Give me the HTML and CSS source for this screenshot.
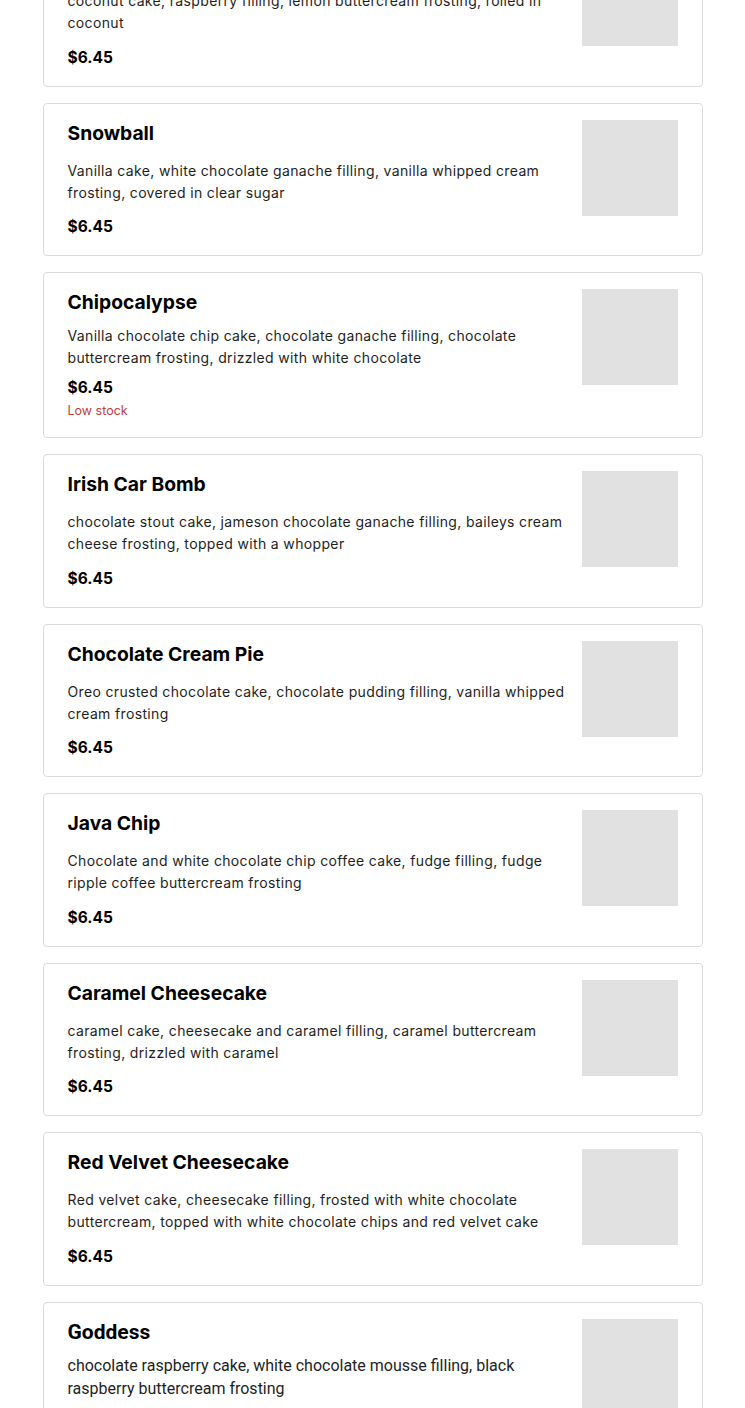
FILE: index.html
```html
<!DOCTYPE html>
<html lang="en">
<head>
<meta charset="utf-8">
<title>Cupcakes</title>
<link rel="stylesheet" href="styles.css">
</head>
<body>
<main class="menu">
  <article class="card">
    <div class="info">
      <h3 class="name">Lemon Raspberry Coconut</h3>
      <p class="desc">coconut cake, raspberry filling, lemon buttercream frosting, rolled in coconut</p>
      <div class="meta"><span class="price">$6.45</span></div>
    </div>
    <div class="thumb"></div>
  </article>
  <article class="card">
    <div class="info">
      <h3 class="name">Snowball</h3>
      <p class="desc">Vanilla cake, white chocolate ganache filling, vanilla whipped cream frosting, covered in clear sugar</p>
      <div class="meta"><span class="price">$6.45</span></div>
    </div>
    <div class="thumb"></div>
  </article>
  <article class="card">
    <div class="info">
      <h3 class="name">Chipocalypse</h3>
      <p class="desc">Vanilla chocolate chip cake, chocolate ganache filling, chocolate buttercream frosting, drizzled with white chocolate</p>
      <div class="meta"><span class="price">$6.45</span><span class="stock">Low stock</span></div>
    </div>
    <div class="thumb"></div>
  </article>
  <article class="card">
    <div class="info">
      <h3 class="name">Irish Car Bomb</h3>
      <p class="desc">chocolate stout cake, jameson chocolate ganache filling, baileys cream cheese frosting, topped with a whopper</p>
      <div class="meta"><span class="price">$6.45</span></div>
    </div>
    <div class="thumb"></div>
  </article>
  <article class="card">
    <div class="info">
      <h3 class="name">Chocolate Cream Pie</h3>
      <p class="desc">Oreo crusted chocolate cake, chocolate pudding filling, vanilla whipped cream frosting</p>
      <div class="meta"><span class="price">$6.45</span></div>
    </div>
    <div class="thumb"></div>
  </article>
  <article class="card">
    <div class="info">
      <h3 class="name">Java Chip</h3>
      <p class="desc">Chocolate and white chocolate chip coffee cake, fudge filling, fudge ripple coffee buttercream frosting</p>
      <div class="meta"><span class="price">$6.45</span></div>
    </div>
    <div class="thumb"></div>
  </article>
  <article class="card">
    <div class="info">
      <h3 class="name">Caramel Cheesecake</h3>
      <p class="desc">caramel cake, cheesecake and caramel filling, caramel buttercream frosting, drizzled with caramel</p>
      <div class="meta"><span class="price">$6.45</span></div>
    </div>
    <div class="thumb"></div>
  </article>
  <article class="card">
    <div class="info">
      <h3 class="name">Red Velvet Cheesecake</h3>
      <p class="desc">Red velvet cake, cheesecake filling, frosted with white chocolate buttercream, topped with white chocolate chips and red velvet cake</p>
      <div class="meta"><span class="price">$6.45</span></div>
    </div>
    <div class="thumb"></div>
  </article>
  <article class="card card-alt">
    <div class="info">
      <h3 class="name">Goddess</h3>
      <p class="desc">chocolate raspberry cake, white chocolate mousse filling, black raspberry buttercream frosting</p>
      <div class="meta"><span class="price">$6.45</span></div>
    </div>
    <div class="thumb"></div>
  </article>
</main>
</body>
</html>
```
FILE: styles.css
```css
* { box-sizing: border-box; }

html, body {
  margin: 0;
  padding: 0;
  background: #ffffff;
}

body {
  font-family: Inter, "Open Sans", "Liberation Sans", sans-serif;
  color: #1a1a1a;
  overflow: hidden;
}

.menu {
  width: 660px;
  margin: -67px auto 0;
  display: flex;
  flex-direction: column;
  gap: 16px;
}

.card {
  display: flex;
  gap: 16px;
  min-height: 153.5px;
  padding: 16px 24px 17px;
  border: 1px solid #dadada;
  border-radius: 4px;
  background: #fff;
}

.info {
  flex: 1;
  display: flex;
  flex-direction: column;
  justify-content: space-between;
  min-width: 0;
}

.name {
  margin: 0;
  font-size: 19.3px;
  line-height: 26px;
  font-weight: 700;
  color: #000;
}

.desc {
  margin: 10px 0 0;
  font-size: 14px;
  line-height: 22px;
  color: #1e1e1e;
  letter-spacing: 0.35px;
}

.meta {
  margin-top: 8px;
  display: flex;
  flex-direction: column;
}

.price {
  font-size: 15.5px;
  line-height: 22px;
  font-weight: 700;
  color: #000;
}

.stock {
  margin-top: 2px;
  font-size: 12.5px;
  line-height: 19px;
  color: #c43d3d;
}

.thumb {
  flex: none;
  width: 96px;
  height: 96px;
  background: #e1e1e1;
}

.card-alt .info {
  justify-content: flex-start;
}

.card-alt .name {
  font-family: Roboto, "Liberation Sans", sans-serif;
  font-size: 21px;
}

.card-alt .desc {
  font-family: Roboto, "Liberation Sans", sans-serif;
  font-size: 16px;
  line-height: 23px;
  margin-top: 9px;
  letter-spacing: 0;
}

.card-alt .meta {
  margin-top: 16px;
}
```
